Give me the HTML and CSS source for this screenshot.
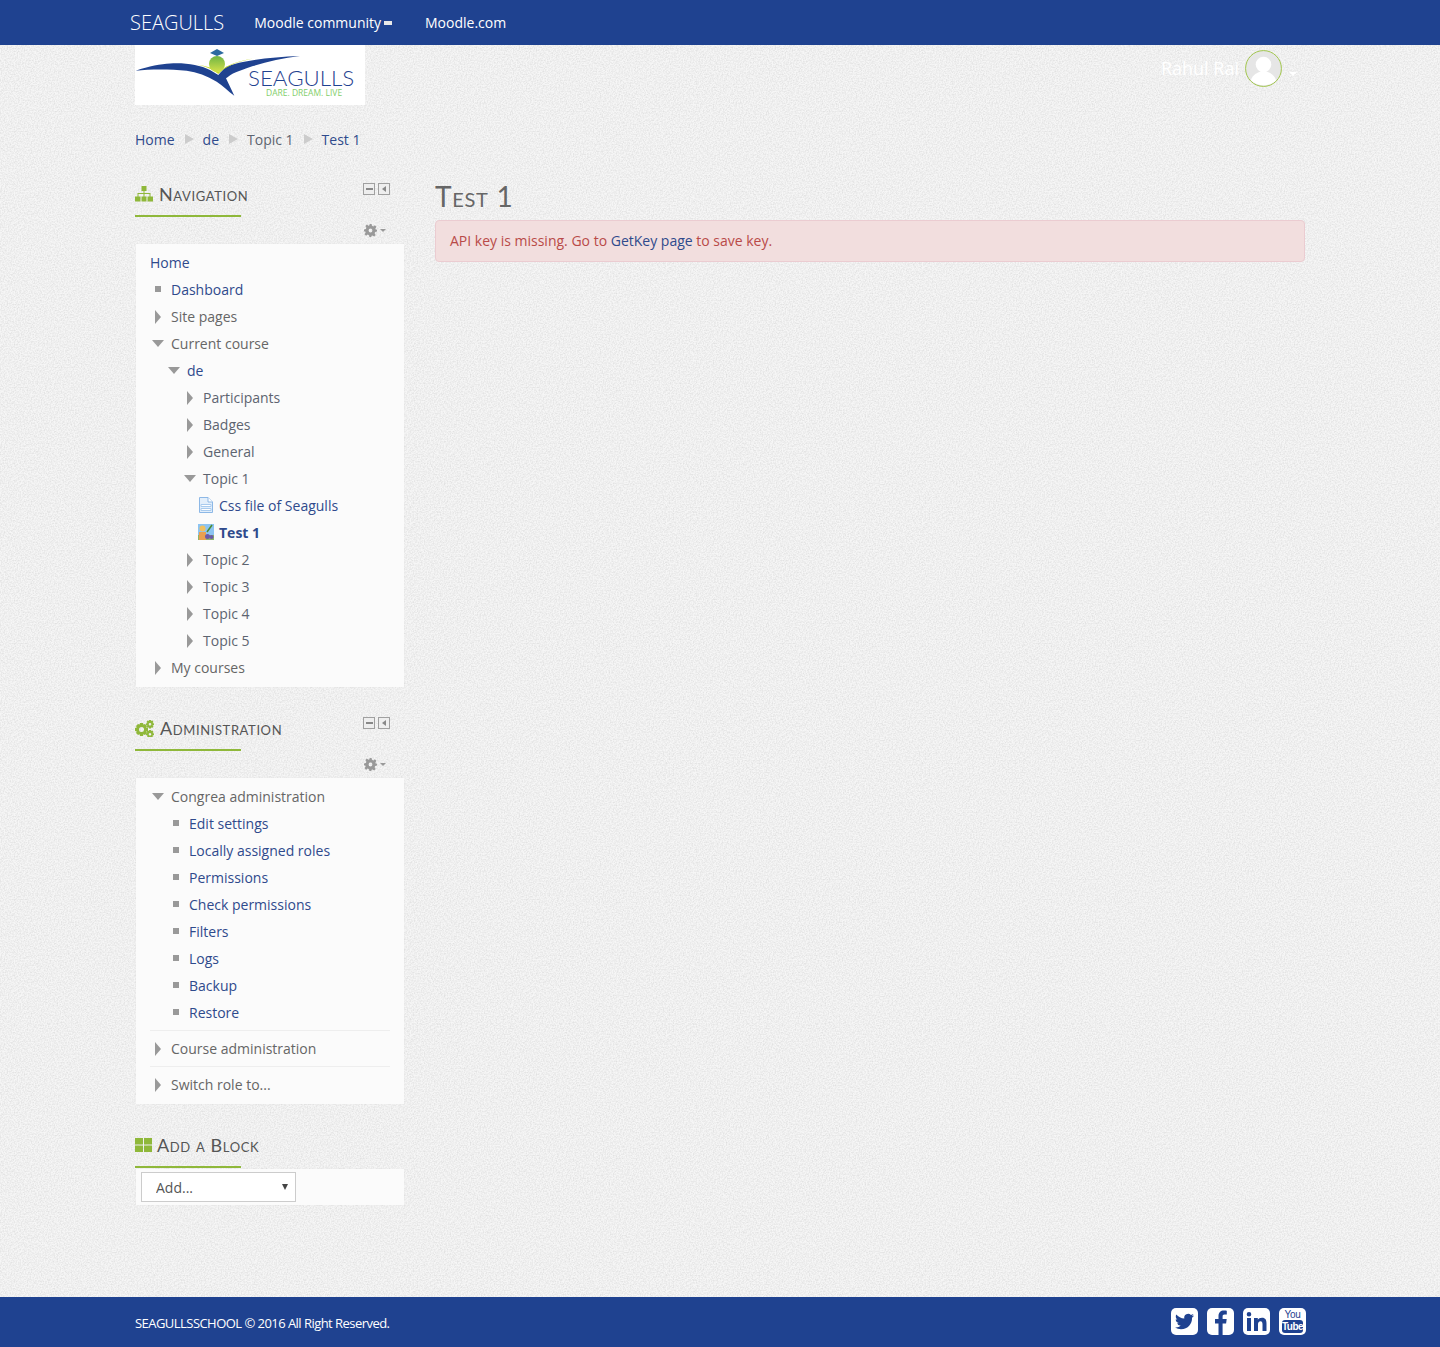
FILE: index.html
```html
<!DOCTYPE html>
<html lang="en">
<head>
  <meta charset="UTF-8" />
  <title>Test 1</title>
  <link rel="stylesheet" href="styles.css">
</head>
<body>
  <nav class="navbar">
    <a class="brand" href="#">SEAGULLS</a>
    <a class="nav-link nav-community" href="#">Moodle community<span class="nav-caret"></span></a>
    <a class="nav-link" href="#">Moodle.com</a>
  </nav>

  <div class="container">
    <header class="page-head">
      <a class="logo" href="#">
        <svg width="230" height="60" viewBox="0 0 230 60">
          <defs>
            <linearGradient id="ball" x1="0" y1="0" x2="0" y2="1">
              <stop offset="0" stop-color="#6fb544"/>
              <stop offset="1" stop-color="#d3e04a"/>
            </linearGradient>
          </defs>
          <path d="M.7 25.700C14 21 26 19 35 18.500C50 17.500 65 20 75 25L83.300 30C86 27 88 24 91.700 21.700C105 16 135 12 165 11C148 13 132 17 118 21C110 24 103 26 98 28.500C95 30 93 32 91 33.300L99.300 50.700C93 46 88 41 81.700 36.700C72 31 62 27 51.700 25.700C35 24 15 24 .7 25.700Z" fill="#1f4290"/>
          <path d="M62 19.500C70 21 77 24 83.300 29C90 22 100 17 118 13.500C103 16 92 20 84 26.500C78 23 71 21 62 19.500Z" fill="#c5d92d"/>
          <circle cx="82" cy="19" r="8" fill="url(#ball)"/>
          <path d="M75 8L82 4L89 8L82 11Z" fill="#2c6aa0"/>
          <text class="logo-name" x="113" y="41">SEAGULLS</text>
          <text class="logo-tag" x="131" y="51">DARE. DREAM. LIVE</text>
        </svg>
      </a>
      <div class="user">
        <span class="user-name">Rahul Rai</span>
        <svg class="avatar" width="37" height="37" viewBox="0 0 38 38">
          <circle cx="19" cy="19" r="18.400" fill="#e6e6e6" stroke="#9fc449"/>
          <circle cx="19" cy="15" r="8" fill="#fff"/>
          <path d="M6 31C8 25 13 23 16 22H22C25 23 30 25 32 31C25 38 13 38 6 31Z" fill="#fff"/>
        </svg>
        <span class="user-caret"></span>
      </div>
    </header>

    <ol class="breadcrumb">
      <li><a href="#">Home</a></li>
      <li><a href="#">de</a></li>
      <li><a class="muted" href="#">Topic 1</a></li>
      <li><a href="#">Test 1</a></li>
    </ol>

    <div class="columns">
      <aside class="sidebar">
        <section class="block">
          <div class="block-head">
            <h2 class="block-title">
              <svg class="block-icon" width="18" height="16" viewBox="0 0 18 16">
                <path d="M6.500 0H11.500V5H9.500V7H15.500V10.500H18V15.500H12.500V10.500H14.500V8H9.500V10.500H11.500V15.500H6.500V10.500H8.500V8H3.500V10.500H5.500V15.500H0V10.500H2.500V7H8.500V5H6.500Z"/>
              </svg>
              Navigation
            </h2>
            <div class="block-controls">
              <span class="ctl"><span class="ctl-min"></span></span>
              <span class="ctl"><span class="ctl-left"></span></span>
            </div>
          </div>
          <div class="block-rule"></div>
          <div class="gear-row">
            <svg class="gear" width="13" height="13" viewBox="0 0 24 24">
              <path d="M10 0H14L14.700 3.400L17.200 4.400L20.100 2.500L22.900 5.300L21 8.200L22 10.700L24 10V14L20.600 14.700L19.600 17.200L21.500 20.100L18.700 22.900L15.800 21L13.300 22L14 24H10L9.300 20.600L6.800 19.600L3.900 21.500L1.100 18.700L3 15.800L2 13.300L0 14V10L3.400 9.300L4.400 6.800L2.500 3.900L5.300 1.100L8.200 3L10.700 2ZM12 8.500A3.500 3.500 0 1 0 12 15.500A3.500 3.500 0 1 0 12 8.500Z" fill-rule="evenodd"/>
            </svg>
            <span class="gear-caret"></span>
          </div>
          <div class="panel">
            <ul class="tree">
              <li class="row row-plain"><a href="#">Home</a></li>
              <li class="row"><span class="i-bullet"></span><a href="#">Dashboard</a></li>
              <li class="row"><span class="i-right"></span><span class="label">Site pages</span></li>
              <li class="row"><span class="i-down"></span><span class="label">Current course</span></li>
              <li>
                <ul class="tree sub">
                  <li class="row"><span class="i-down"></span><a href="#">de</a></li>
                  <li>
                    <ul class="tree sub">
                      <li class="row"><span class="i-right"></span><a class="muted" href="#">Participants</a></li>
                      <li class="row"><span class="i-right"></span><a class="muted" href="#">Badges</a></li>
                      <li class="row"><span class="i-right"></span><a class="muted" href="#">General</a></li>
                      <li class="row"><span class="i-down"></span><a class="muted" href="#">Topic 1</a></li>
                      <li>
                        <ul class="tree sub">
                          <li class="row">
                            <svg class="res-icon" width="16" height="16" viewBox="0 0 16 16">
                              <path d="M.5.5H9L13.500 5V15.500H.5Z" fill="#e3effb" stroke="#8db8e6"/>
                              <path d="M9 .5V5H13.500" fill="#fff" stroke="#8db8e6"/>
                              <path d="M2 7.500H12V9.500H2ZM2 11.500H12V13.500H2Z" fill="#fff" stroke="#a9cbee"/>
                            </svg>
                            <a href="#">Css file of Seagulls</a>
                          </li>
                          <li class="row">
                            <svg class="res-icon res-quiz" width="16" height="16" viewBox="0 0 16 16">
                              <rect width="16" height="16" fill="#8cc4f2"/>
                              <rect y="11" width="16" height="5" fill="#8fb56a"/>
                              <circle cx="4.500" cy="4.500" r="3" fill="#f0c060"/>
                              <path d="M1 8H8V16H1Z" fill="#e8a050"/>
                              <circle cx="9.500" cy="12.500" r="2.500" fill="#6a5aa8"/>
                              <circle cx="13.500" cy="13" r="2" fill="#6a5aa8"/>
                              <path d="M9 8L14 1" stroke="#4c8a2f" stroke-width="1.500"/>
                            </svg>
                            <a class="current" href="#">Test 1</a>
                          </li>
                        </ul>
                      </li>
                      <li class="row"><span class="i-right"></span><a class="muted" href="#">Topic 2</a></li>
                      <li class="row"><span class="i-right"></span><a class="muted" href="#">Topic 3</a></li>
                      <li class="row"><span class="i-right"></span><a class="muted" href="#">Topic 4</a></li>
                      <li class="row"><span class="i-right"></span><a class="muted" href="#">Topic 5</a></li>
                    </ul>
                  </li>
                </ul>
              </li>
              <li class="row"><span class="i-right"></span><span class="label">My courses</span></li>
            </ul>
          </div>
        </section>

        <section class="block">
          <div class="block-head">
            <h2 class="block-title">
              <svg class="block-icon" width="19" height="17" viewBox="0 0 19 17">
                <path fill-rule="evenodd" d="M5 3H8L8.400 4.600L10 4L12 6L11.200 7.500L13 8V11L11.200 11.500L12 13L10 15L8.400 14.300L8 16H5L4.600 14.300L3 15L1 13L1.800 11.500L0 11V8L1.800 7.500L1 6L3 4L4.600 4.600ZM6.500 7A2.500 2.500 0 1 0 6.500 12A2.500 2.500 0 1 0 6.500 7Z"/>
                <path fill-rule="evenodd" d="M14 0H16L16.200 1L17.500 .6L18.500 2L17.600 3L19 3.500V5L17.600 5.500L18.500 6.700L17.500 7.800L16.200 7.400L16 8.500H14L13.800 7.400L12.500 7.800L11.500 6.700L12.400 5.500L11 5V3.500L12.400 3L11.500 2L12.500 .6L13.800 1ZM15 3A1.300 1.300 0 1 0 15 5.600A1.300 1.300 0 1 0 15 3Z"/>
                <path fill-rule="evenodd" d="M14 10H16L16.200 11L17.500 10.600L18.500 12L17.600 13L19 13.500V15L17.600 15.500L18 16.500L17 17H13L12 16.500L12.400 15.500L11 15V13.500L12.400 13L11.500 12L12.500 10.600L13.800 11ZM15 13A1.300 1.300 0 1 0 15 15.600A1.300 1.300 0 1 0 15 13Z"/>
              </svg>
              Administration
            </h2>
            <div class="block-controls">
              <span class="ctl"><span class="ctl-min"></span></span>
              <span class="ctl"><span class="ctl-left"></span></span>
            </div>
          </div>
          <div class="block-rule"></div>
          <div class="gear-row">
            <svg class="gear" width="13" height="13" viewBox="0 0 24 24">
              <path d="M10 0H14L14.700 3.400L17.200 4.400L20.100 2.500L22.900 5.300L21 8.200L22 10.700L24 10V14L20.600 14.700L19.600 17.200L21.500 20.100L18.700 22.900L15.800 21L13.300 22L14 24H10L9.300 20.600L6.800 19.600L3.900 21.500L1.100 18.700L3 15.800L2 13.300L0 14V10L3.400 9.300L4.400 6.800L2.500 3.900L5.300 1.100L8.200 3L10.700 2ZM12 8.500A3.500 3.500 0 1 0 12 15.500A3.500 3.500 0 1 0 12 8.500Z" fill-rule="evenodd"/>
            </svg>
            <span class="gear-caret"></span>
          </div>
          <div class="panel">
            <div class="section">
              <ul class="tree">
                <li class="row"><span class="i-down"></span><span class="label">Congrea administration</span></li>
                <li>
                  <ul class="tree sub-admin">
                    <li class="row"><span class="i-bullet"></span><a href="#">Edit settings</a></li>
                    <li class="row"><span class="i-bullet"></span><a href="#">Locally assigned roles</a></li>
                    <li class="row"><span class="i-bullet"></span><a href="#">Permissions</a></li>
                    <li class="row"><span class="i-bullet"></span><a href="#">Check permissions</a></li>
                    <li class="row"><span class="i-bullet"></span><a href="#">Filters</a></li>
                    <li class="row"><span class="i-bullet"></span><a href="#">Logs</a></li>
                    <li class="row"><span class="i-bullet"></span><a href="#">Backup</a></li>
                    <li class="row"><span class="i-bullet"></span><a href="#">Restore</a></li>
                  </ul>
                </li>
              </ul>
            </div>
            <div class="section">
              <ul class="tree">
                <li class="row"><span class="i-right"></span><span class="label">Course administration</span></li>
              </ul>
            </div>
            <div class="section">
              <ul class="tree">
                <li class="row"><span class="i-right"></span><span class="label">Switch role to...</span></li>
              </ul>
            </div>
          </div>
        </section>

        <section class="block">
          <div class="block-head">
            <h2 class="block-title title-add">
              <svg class="block-icon" width="17" height="14" viewBox="0 0 17 14">
                <path d="M0 0H8V6.500H0ZM9 0H17V6.500H9ZM0 7.500H8V14H0ZM9 7.500H17V14H9Z"/>
              </svg>
              Add a Block
            </h2>
          </div>
          <div class="block-rule"></div>
          <div class="panel panel-add">
            <div class="select-wrap">
              <select class="add-select">
                <option>Add...</option>
              </select>
            </div>
          </div>
        </section>
      </aside>

      <main class="content">
        <h1 class="page-title">Test 1</h1>
        <div class="alert">API key is missing. Go to <a href="#">GetKey page</a> to save key.</div>
      </main>
    </div>
  </div>

  <footer class="footer">
    <div class="footer-inner">
      <p class="copyright">SEAGULLSSCHOOL © 2016 All Right Reserved.</p>
      <div class="social">
        <a class="social-icon" href="#">
          <svg width="19" height="19" viewBox="0 0 24 24">
            <path d="M23.953 4.57a10 10 0 01-2.825.775 4.958 4.958 0 002.163-2.723c-.951.555-2.005.959-3.127 1.184a4.92 4.92 0 00-8.384 4.482C7.69 8.095 4.067 6.13 1.64 3.162a4.822 4.822 0 00-.666 2.475c0 1.71.87 3.213 2.188 4.096a4.904 4.904 0 01-2.228-.616v.06a4.923 4.923 0 003.946 4.827 4.996 4.996 0 01-2.212.085 4.936 4.936 0 004.604 3.417 9.867 9.867 0 01-6.102 2.105c-.39 0-.779-.023-1.17-.067a13.995 13.995 0 007.557 2.209c9.053 0 13.998-7.496 13.998-13.985 0-.21 0-.42-.015-.63A9.935 9.935 0 0024 4.59z"/>
          </svg>
        </a>
        <a class="social-icon" href="#">
          <svg width="27" height="27" viewBox="0 0 27 27">
            <path d="M11.500 27V15.500H8V11H11.500V8C11.500 4.500 13.700 2.500 16.800 2.500C18.300 2.500 19.500 2.600 19.800 2.700V6.500H17.600C15.900 6.500 15.600 7.300 15.600 8.500V11H19.700L19.100 15.500H15.600V27Z"/>
          </svg>
        </a>
        <a class="social-icon" href="#">
          <svg width="21" height="21" viewBox="0 0 21 21">
            <path d="M1 7H5V20H1ZM3 1A2.300 2.300 0 1 1 3 5.600A2.300 2.300 0 1 1 3 1ZM8 7H11.800V8.800C12.500 7.600 14 6.700 16 6.700C19.600 6.700 20.500 9 20.500 12.500V20H16.500V13.300C16.500 11.600 16.200 10.200 14.500 10.200C12.800 10.200 12 11.500 12 13.300V20H8Z"/>
          </svg>
        </a>
        <a class="social-icon social-yt" href="#">
          <span class="yt-you">You</span>
          <span class="yt-tube">Tube</span>
        </a>
      </div>
    </div>
  </footer>
</body>
</html>
```

FILE: styles.css
```css
* {
  box-sizing: border-box;
}

body {
  font-family: "Open Sans", "Liberation Sans", sans-serif;
  font-size: 14px;
  color: #666;
  background-color: #f6f6f6;
  background-image: url("data:image/svg+xml,%3Csvg xmlns='http://www.w3.org/2000/svg' width='256' height='256'%3E%3Cfilter id='n' color-interpolation-filters='sRGB'%3E%3CfeTurbulence type='fractalNoise' baseFrequency='.7' numOctaves='2' stitchTiles='stitch'/%3E%3CfeColorMatrix values='0 0 0 0 .7 0 0 0 0 .7 0 0 0 0 .7 .6 0 0 0 -.2'/%3E%3C/filter%3E%3Crect width='256' height='256' filter='url(%23n)'/%3E%3C/svg%3E");
  margin: 0;
  padding: 0;
}

a {
  color: #2f4a8c;
  text-decoration: none;
}

a.muted {
  color: #5d6470;
}

ul,
ol {
  list-style: none;
  margin: 0;
  padding: 0;
}

/* top bar */
.navbar {
  display: flex;
  align-items: center;
  height: 45px;
  padding-left: 130px;
  background-color: #1f4290;
}

.brand {
  color: #fff;
  font-size: 20px;
  font-weight: 300;
  margin-right: 30px;
}

.nav-link {
  color: #fff;
  font-size: 14px;
  font-weight: 500;
}

.nav-community {
  display: flex;
  align-items: center;
  margin-right: 33px;
}

.nav-caret {
  width: 8px;
  height: 4px;
  margin-left: 3px;
  background-color: #e8e8e8;
}

.container {
  width: 1170px;
  margin: 0 auto;
  min-height: 1252px;
}

.page-head {
  display: flex;
  justify-content: space-between;
  height: 60px;
}

.logo {
  display: block;
  width: 230px;
  height: 60px;
  background-color: #fff;
}

.logo svg {
  display: block;
}

.logo-name {
  font-family: "Lato", sans-serif;
  font-size: 22.300px;
  font-weight: 300;
  fill: #1f4290;
}

.logo-tag {
  font-family: "Open Sans", sans-serif;
  font-size: 8.500px;
  fill: #7fce6a;
}

.user {
  display: flex;
  align-items: flex-start;
  padding: 5px 8px 0 0;
}

.user-name {
  color: #fff;
  font-size: 18px;
  line-height: 36px;
  margin-right: 6px;
}

.user-caret {
  width: 0;
  height: 0;
  margin: 22px 0 0 7px;
  border-left: 4px solid transparent;
  border-right: 4px solid transparent;
  border-top: 4px solid #fff;
}

.breadcrumb {
  display: flex;
  align-items: center;
  height: 20px;
  margin-top: 24px;
}

.breadcrumb li {
  display: flex;
  align-items: center;
}

.breadcrumb li + li::before {
  content: "";
  width: 0;
  height: 0;
  margin: 0 9px 0 10px;
  border-top: 5px solid transparent;
  border-bottom: 5px solid transparent;
  border-left: 9px solid #ccc;
}

.columns {
  display: flex;
  gap: 30px;
  margin-top: 26px;
}

/* sidebar */
.sidebar {
  width: 270px;
  flex-shrink: 0;
}

.block {
  margin-bottom: 22px;
}

.block-head {
  display: flex;
  justify-content: space-between;
  height: 40px;
}

.block-title {
  display: flex;
  align-items: center;
  gap: 6px;
  height: 38px;
  margin: 0;
  font-family: "Lato", "Open Sans", sans-serif;
  font-size: 18px;
  font-weight: 400;
  font-variant: small-caps;
  letter-spacing: .6px;
  color: #555;
}

.title-add {
  gap: 5px;
}

.block-icon {
  fill: #8fb83a;
  flex-shrink: 0;
}

.block-rule {
  width: 106px;
  height: 2px;
  background-color: #8fb83a;
}

.block-controls {
  display: flex;
  gap: 3px;
  padding: 8px 15px 0 0;
}

.ctl {
  display: flex;
  align-items: center;
  justify-content: center;
  width: 12px;
  height: 12px;
  border: 1px solid #a0a0a0;
  background-color: #eee;
}

.ctl-min {
  width: 7px;
  height: 2px;
  background-color: #888;
}

.ctl-left {
  width: 0;
  height: 0;
  border-top: 3px solid transparent;
  border-bottom: 3px solid transparent;
  border-right: 4px solid #888;
}

.gear-row {
  display: flex;
  align-items: center;
  justify-content: flex-end;
  gap: 3px;
  height: 27px;
  padding-right: 19px;
}

.gear {
  fill: #999;
  margin-top: -1px;
}

.gear-caret {
  width: 0;
  height: 0;
  border-left: 3.500px solid transparent;
  border-right: 3.500px solid transparent;
  border-top: 3px solid #999;
}

.panel {
  margin: 0 1px;
  padding: 5px 14px 6px;
  background-color: #fbfbfb;
  box-shadow: 0 0 1px rgba(0, 0, 0, .08);
}

.panel-add {
  margin-top: 1px;
  padding: 3px 5px;
}

.section {
  padding: 4px 0;
  border-top: 1px solid #eee;
}

.section:first-child {
  padding-top: 0;
  border-top: 0;
}

.section:last-child {
  padding-bottom: 0;
}

.tree.sub {
  padding-left: 16px;
}

.tree.sub-admin {
  padding-left: 18px;
}

.row {
  display: flex;
  align-items: center;
  height: 27px;
  padding-left: 1px;
}

.row-plain {
  padding-left: 0;
}

.label {
  color: #666;
}

.current {
  font-weight: 700;
}

.i-bullet,
.i-right,
.i-down {
  width: 20px;
  flex-shrink: 0;
  height: 14px;
}

.i-bullet::before {
  content: "";
  display: block;
  width: 6px;
  height: 6px;
  margin: 3px 0 0 4px;
  background-color: #999;
}

.i-right::before {
  content: "";
  display: block;
  width: 0;
  height: 0;
  margin: 0 0 0 4px;
  border-top: 7px solid transparent;
  border-bottom: 7px solid transparent;
  border-left: 6px solid #999;
}

.i-down::before {
  content: "";
  display: block;
  width: 0;
  height: 0;
  margin: 3px 0 0 1px;
  border-left: 6px solid transparent;
  border-right: 6px solid transparent;
  border-top: 7px solid #999;
}

.res-icon {
  width: 16px;
  margin-right: 4px;
  flex-shrink: 0;
  margin-top: -2px;
}

.res-quiz {
  margin-left: -1px;
  margin-right: 5px;
}

.select-wrap {
  position: relative;
  width: 155px;
}

.select-wrap::after {
  content: "";
  position: absolute;
  top: 12px;
  right: 8px;
  border-left: 3px solid transparent;
  border-right: 3px solid transparent;
  border-top: 6px solid #444;
}

.add-select {
  display: block;
  width: 100%;
  height: 30px;
  padding: 0 14px;
  appearance: none;
  font-family: inherit;
  font-size: 14px;
  color: #555;
  background-color: #fff;
  border: 1px solid #ccc;
  border-radius: 0;
}

/* main column */
.content {
  flex: 1;
}

.page-title {
  margin: 0;
  height: 45px;
  font-family: "Lato", "Open Sans", sans-serif;
  font-size: 28px;
  line-height: 42px;
  font-weight: 400;
  font-variant: small-caps;
  letter-spacing: .7px;
  color: #666;
}

.alert {
  height: 42px;
  padding: 0 14px;
  line-height: 40px;
  color: #b94a48;
  background-color: #f2dede;
  border: 1px solid #ebccd1;
  border-radius: 4px;
}

/* footer */
.footer {
  height: 50px;
  background-color: #1f4290;
}

.footer-inner {
  display: flex;
  align-items: center;
  justify-content: space-between;
  width: 1170px;
  height: 100%;
  margin: 0 auto;
}

.copyright {
  margin: 2px 0 0;
  color: #fff;
  font-size: 13px;
  letter-spacing: -.54px;
}

.social {
  display: flex;
  gap: 9px;
  margin: -2px -1px 0 0;
}

.social-icon {
  display: flex;
  align-items: center;
  justify-content: center;
  width: 27px;
  height: 27px;
  overflow: hidden;
  background-color: #fff;
  border-radius: 5px;
}

.social-icon svg {
  display: block;
  fill: #1f4290;
}

.social-yt {
  flex-direction: column;
}

.yt-you {
  color: #1f4290;
  font-family: "Liberation Sans Narrow", "Liberation Sans", sans-serif;
  font-size: 10px;
  line-height: 11px;
  letter-spacing: -.3px;
}

.yt-tube {
  width: 21px;
  height: 13px;
  border-radius: 3px;
  color: #fff;
  background-color: #1f4290;
  font-family: "Liberation Sans Narrow", "Liberation Sans", sans-serif;
  font-size: 10px;
  font-weight: 700;
  line-height: 13px;
  letter-spacing: -.5px;
  text-align: center;
}
```
